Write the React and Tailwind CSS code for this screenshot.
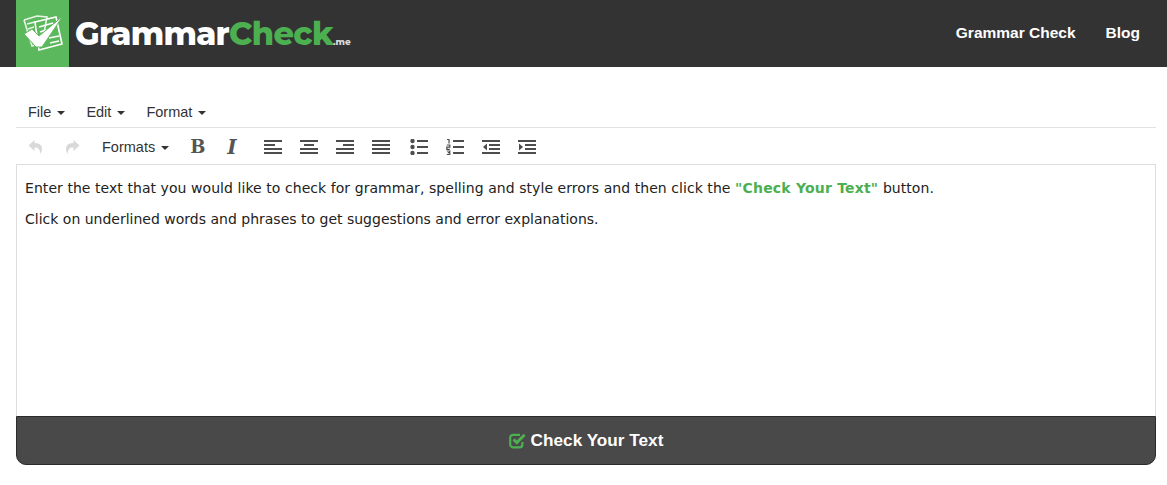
const sans = "font-['Liberation_Sans',Arial,sans-serif]";

function Caret() {
  return <span className="ml-[6px] inline-block border-x-[4px] border-t-[4px] border-x-transparent border-t-[#333]" />;
}

function Lines({ rows }) {
  return (
    <svg width="18" height="16" viewBox="0 0 18 16" className="block">
      {rows.map(([x, y, w], i) => (
        <rect key={i} x={x} y={y} width={w} height="2" fill="#4d4d4d" />
      ))}
    </svg>
  );
}

function UndoIcon({ flip }) {
  return (
    <svg width="16" height="16" viewBox="0 0 16 16" className={flip ? "-scale-x-100" : ""}>
      <path d="M6.5 1 L0.5 6.5 L6.5 12 V8.6 C10 8.4 11.8 10 12.4 15 C15.5 9.5 14.5 4 6.5 4 Z" fill="#d9d9d9" />
    </svg>
  );
}

function ListIcon() {
  return (
    <svg width="18" height="16" viewBox="0 0 18 16" className="block">
      <circle cx="2.5" cy="2" r="2.2" fill="#4d4d4d" />
      <circle cx="2.5" cy="8" r="2.2" fill="#4d4d4d" />
      <circle cx="2.5" cy="14" r="2.2" fill="#4d4d4d" />
      <rect x="7" y="1" width="11" height="2" fill="#4d4d4d" />
      <rect x="7" y="7" width="11" height="2" fill="#4d4d4d" />
      <rect x="7" y="13" width="11" height="2" fill="#4d4d4d" />
    </svg>
  );
}

function NumListIcon() {
  return (
    <svg width="18" height="16" viewBox="0 0 18 16" className="block">
      <path d="M1 0.5h2v4M0.8 6h3v2.2h-3v2.2h3M0.8 12h3v1.6h-2M3.8 13.6v1.9h-3" fill="none" stroke="#4d4d4d" strokeWidth="1.2" />
      <rect x="7" y="1" width="11" height="2" fill="#4d4d4d" />
      <rect x="7" y="7" width="11" height="2" fill="#4d4d4d" />
      <rect x="7" y="13" width="11" height="2" fill="#4d4d4d" />
    </svg>
  );
}

function IndentIcon({ outdent }) {
  return (
    <svg width="18" height="16" viewBox="0 0 18 16" className="block">
      <rect x="0" y="1" width="18" height="2" fill="#4d4d4d" />
      <rect x="7" y="5" width="11" height="2" fill="#4d4d4d" />
      <rect x="7" y="9" width="11" height="2" fill="#4d4d4d" />
      <rect x="0" y="13" width="18" height="2" fill="#4d4d4d" />
      <path d={outdent ? "M5 4.5 V11.5 L1 8 Z" : "M1 4.5 V11.5 L5 8 Z"} fill="#4d4d4d" />
    </svg>
  );
}

function CheckSquare() {
  return (
    <svg width="18" height="16" viewBox="0 0 18 16" className="block">
      <path d="M13.4 9 V11.6 a2.8 2.8 0 0 1 -2.8 2.8 H4 A2.8 2.8 0 0 1 1.2 11.6 V4.6 A2.8 2.8 0 0 1 4 1.8 H11" fill="none" stroke="#4caf50" strokeWidth="2.2" />
      <path d="M4.6 6.4 L7.8 9.6 L15.6 1.8" fill="none" stroke="#4caf50" strokeWidth="3" />
    </svg>
  );
}

function Logo() {
  return (
    <div className="flex h-[67px] items-center">
      <div className="flex h-[67px] w-[53px] items-center justify-center bg-[#5cb85c]">
        <svg width="42" height="40" viewBox="0 0 42 40">
          <g fill="none" stroke="#fff" strokeWidth="1.6">
            <path d="M2 6 L15 2 L25 3 L21 24" opacity="0.85" />
            <path d="M2 6 L10 32 L17 30" opacity="0.85" />
            <path d="M13 8 L34 3 L40 30 L17 36 Z" />
            <path d="M5 10 L13 8 M6 15 L12 13 M8 21 L12 20" opacity="0.85" />
            <path d="M17 13 L31 9 M18 18 L24 16 M27 24 L37 22 M28 29 L37 27" />
          </g>
          <path d="M2 20 L10 15 L17 22 L41 2 L20 33 L14 33 Z" fill="#fff" stroke="#5cb85c" strokeWidth="1" />
        </svg>
      </div>
      <div className="ml-[6px] flex items-baseline font-['Montserrat',Inter,sans-serif] text-[32px] font-extrabold tracking-[-0.7px]">
        <span className="text-white">Grammar</span>
        <span className="text-[#4caf50]">Check</span>
        <span className="text-[9px] tracking-normal text-[#d8d8d8]">.me</span>
      </div>
    </div>
  );
}

export default function App() {
  return (
    <div className={`min-h-[485px] bg-white ${sans}`}>
      <header className="flex h-[67px] items-center justify-between bg-[#333] pl-4 pr-[27px]">
        <Logo />
        <nav className="flex gap-[30px] pb-[2px] text-[15.5px] font-bold text-white">
          <a>Grammar Check</a>
          <a>Blog</a>
        </nav>
      </header>

      <div className="ml-4 mr-[11px] mt-[30px]">
        <div className="flex h-[31px] items-center gap-[21px] border-b border-[#e2e2e2] pl-3 pt-[2px] text-[14.5px] text-[#333]">
          <span className="flex items-center">File<Caret /></span>
          <span className="flex items-center">Edit<Caret /></span>
          <span className="flex items-center">Format<Caret /></span>
        </div>

        <div className="flex h-[36px] items-center pl-3 pt-[2px]">
          <UndoIcon />
          <span className="ml-[20px]"><UndoIcon flip /></span>
          <span className="ml-[22px] flex items-center pt-[2px] text-[14.5px] text-[#333]">Formats<Caret /></span>
          <span className="ml-[21px] w-[14px] font-['DejaVu_Serif',serif] text-[18px] font-bold leading-none text-[#555]">B</span>
          <span className="ml-[23px] w-[15px] font-['DejaVu_Serif',serif] text-[20px] font-bold italic leading-none text-[#555]">I</span>
          <div className="ml-[22px] flex gap-[18px]">
            <Lines rows={[[0, 1, 18], [0, 5, 11], [0, 9, 18], [0, 13, 18]]} />
            <Lines rows={[[0, 1, 18], [4, 5, 10], [0, 9, 18], [0, 13, 18]]} />
            <Lines rows={[[0, 1, 18], [7, 5, 11], [0, 9, 18], [0, 13, 18]]} />
            <Lines rows={[[0, 1, 18], [0, 5, 18], [0, 9, 18], [0, 13, 18]]} />
            <span className="ml-[2px]"><ListIcon /></span>
            <NumListIcon />
            <IndentIcon outdent />
            <IndentIcon />
          </div>
        </div>

        <div className="h-[252px] border border-b-0 border-[#ddd] px-2 pt-[15px] font-['DejaVu_Sans',Verdana,sans-serif] text-[14px] leading-[17px] text-[#222]">
          <p className="tracking-[0.06px]">
            Enter the text that you would like to check for grammar, spelling and style errors and then click the{" "}
            <b className="tracking-[0.2px] text-[#4caf50]">"Check Your Text"</b> button.
          </p>
          <p className="mt-[14px]">Click on underlined words and phrases to get suggestions and error explanations.</p>
        </div>

        <button className="flex h-[49px] w-full items-center justify-center gap-[4px] rounded-b-[10px] border border-[#2b2b2b] bg-[#494949] text-[17.2px] font-bold text-white">
          <CheckSquare />
          Check Your Text
        </button>
      </div>
    </div>
  );
}
